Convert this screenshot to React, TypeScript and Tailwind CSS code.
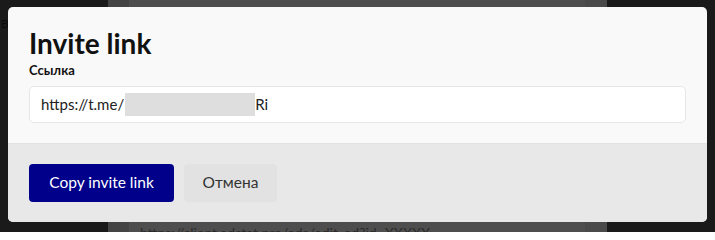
import React from "react";

export default function App() {
  return (
    <div className="relative h-[232px] w-[715px] overflow-hidden font-['Lato',sans-serif]">
      {/* dimmed page behind */}
      <div className="flex h-full w-full">
        <div className="w-[108px] bg-[#1a1a1a] pt-[18px] pl-[1px] text-[12px] leading-none text-[#0a0a0a]">B</div>
        <div className="w-[21px] bg-[#444444]" />
        <div className="flex flex-1 flex-col justify-end bg-[#4e4e4e] pl-[11px]">
          <div className="h-[8px] overflow-hidden whitespace-nowrap text-[14px] leading-[18px] text-[#2a2a2a]">
            https://client.adstat.pro/ads/edit_ad?id=XXXXX
          </div>
        </div>
        <div className="w-[22px] bg-[#4a4a4a]" />
        <div className="w-[108px] bg-[#1a1a1a]" />
      </div>

      {/* dialog */}
      <div className="absolute left-[8px] top-[7px] w-[699px] overflow-hidden rounded-[5px] bg-[#f9f9f9]">
        <div className="px-[21px] pt-[19px] pb-[20px]">
          <h1 className="text-[28px] font-bold leading-[34px] text-[#111]">Invite link</h1>
          <div className="mt-[2px] text-[13px] font-bold leading-[16px] text-[#111]">Ссылка</div>
          <div className="mt-[8px] flex h-[37px] items-center rounded-[5px] border border-[#e6e6e6] bg-white pl-[11px] text-[15px] text-[#222]">
            <span>https://t.me/</span>
            <span className="ml-[1px] h-[23px] w-[130px] bg-[#dedede]" />
            <span>Ri</span>
          </div>
        </div>
        <div className="flex h-[79px] items-center gap-[10px] border-t border-[#e2e2e2] bg-[#e8e8e8] px-[21px]">
          <button className="h-[38px] w-[145px] rounded-[4px] bg-[#00008b] text-[15.5px] text-white">
            Copy invite link
          </button>
          <button className="h-[38px] w-[93px] rounded-[4px] bg-[#e2e2e2] text-[15.5px] text-[#333]">
            Отмена
          </button>
        </div>
      </div>
    </div>
  );
}
